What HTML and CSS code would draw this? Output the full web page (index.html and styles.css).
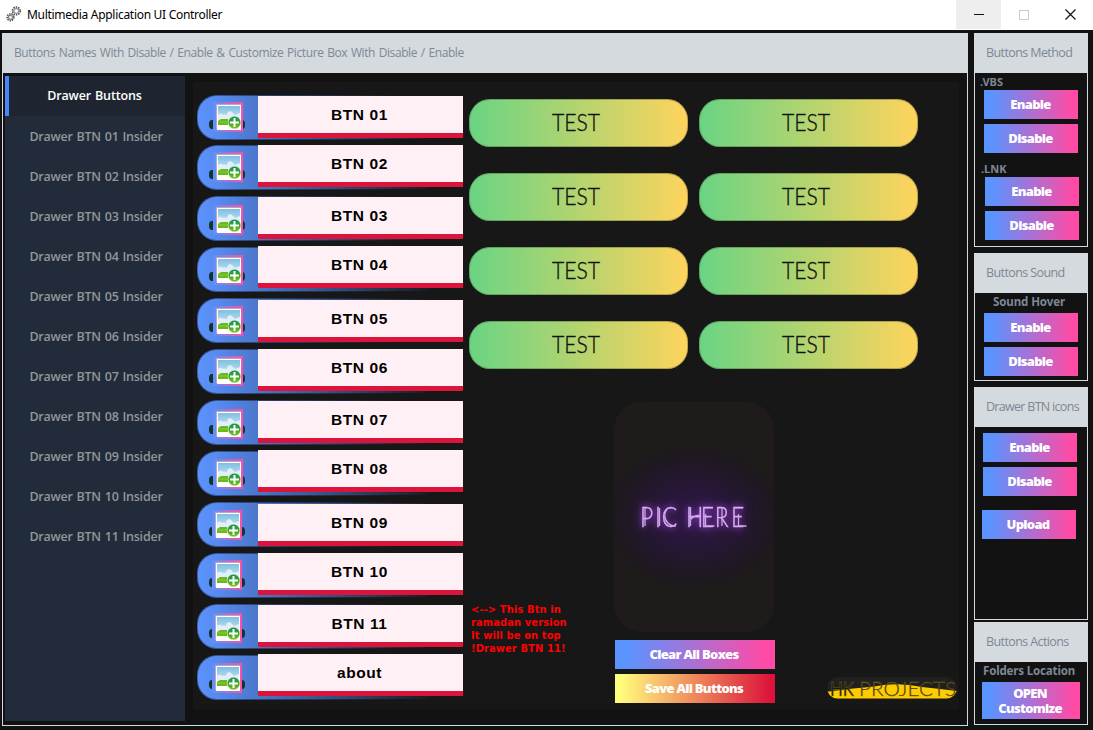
FILE: index.html
```html
<!DOCTYPE html>
<html lang="en">
<head>
<meta charset="utf-8">
<title>Multimedia Application UI Controller</title>
<link rel="stylesheet" href="styles.css">
</head>
<body>
<svg class="defs" width="0" height="0" aria-hidden="true">
  <defs>
    <linearGradient id="sky" x1="0" y1="0" x2="0" y2="1"><stop offset="0" stop-color="#7fbfe0"/><stop offset="1" stop-color="#d3eaf8"/></linearGradient>
    <linearGradient id="leaf" x1="0" y1="0" x2="0" y2="1"><stop offset="0" stop-color="#138f5f"/><stop offset="0.5" stop-color="#3ba42a"/><stop offset="1" stop-color="#7cc421"/></linearGradient>
    <linearGradient id="frame" x1="0" y1="0" x2="1" y2="0"><stop offset="0" stop-color="#5b92fd"/><stop offset="1" stop-color="#ff4fa6"/></linearGradient>
    <symbol id="picture" viewBox="0 0 30 30">
      <rect width="30" height="30" fill="url(#frame)"/>
      <rect x="3" y="2" width="25" height="25" fill="#b7a6c6"/>
      <rect x="4" y="3" width="24" height="25" fill="#fff"/>
      <rect x="5" y="4" width="22" height="16" fill="url(#sky)"/>
      <path d="M5 13c2-2 4-1 5 0 2-1 3 0 4 0 0-4 4-5 6-2l2 2 5-2v9H5z" fill="#e2effb"/>
      <path d="M5 19l3-2h7v6H5z" fill="#69b81d"/>
      <path d="M5 20h11" stroke="#86ce35"/>
      <circle cx="21.500" cy="20.500" r="6.300" fill="url(#leaf)" stroke="#d8f2c2" stroke-width=".5"/>
      <path d="M21.500 16v9M17 20.500h9" stroke="#fff" stroke-width="2"/>
    </symbol>
    <symbol id="test" viewBox="0 0 50 26"><text class="test-text" x="1" y="21" textLength="48" lengthAdjust="spacingAndGlyphs">TEST</text></symbol>
  </defs>
</svg>

<header class="titlebar">
  <svg class="gears" viewBox="0 0 16 16" width="16" height="16">
    <g fill="none" stroke="#555">
      <circle cx="10.300" cy="4.900" r="3.800" stroke-width="1.800" stroke-dasharray="1.500 .9"/>
      <circle cx="10.300" cy="4.900" r="2.400" stroke="#999" stroke-width="1.300"/>
      <circle cx="4.500" cy="11.300" r="3.300" stroke-width="1.800" stroke-dasharray="1.400 .9"/>
      <circle cx="4.500" cy="11.300" r="2" stroke="#888" stroke-width="1.300"/>
    </g>
  </svg>
  <span class="title">Multimedia Application UI Controller</span>
  <div class="controls">
    <div class="ctl hover"><svg width="10" height="10"><path d="M0 4.500h10" stroke="#111"/></svg></div>
    <div class="ctl"><svg width="10" height="10"><rect x=".5" y=".5" width="9" height="9" fill="none" stroke="#ccc"/></svg></div>
    <div class="ctl"><svg width="11" height="11"><path d="M.5.500l10 10M10.500.500l-10 10" stroke="#111" stroke-width="1.200"/></svg></div>
  </div>
</header>

<div class="app">
  <main class="main">
    <h1 class="head main-head">Buttons Names With Disable / Enable &amp; Customize Picture Box With Disable / Enable</h1>
    <div class="body">
      <nav class="nav">
        <a class="active">Drawer Buttons</a>
        <a>Drawer BTN 01 Insider</a>
        <a>Drawer BTN 02 Insider</a>
        <a>Drawer BTN 03 Insider</a>
        <a>Drawer BTN 04 Insider</a>
        <a>Drawer BTN 05 Insider</a>
        <a>Drawer BTN 06 Insider</a>
        <a>Drawer BTN 07 Insider</a>
        <a>Drawer BTN 08 Insider</a>
        <a>Drawer BTN 09 Insider</a>
        <a>Drawer BTN 10 Insider</a>
        <a>Drawer BTN 11 Insider</a>
      </nav>
      <section class="panel">
        <div class="rows">
          <div class="row"><svg class="pic"><use href="#picture"/></svg><div class="field">BTN 01</div></div>
          <div class="row"><svg class="pic"><use href="#picture"/></svg><div class="field">BTN 02</div></div>
          <div class="row"><svg class="pic"><use href="#picture"/></svg><div class="field">BTN 03</div></div>
          <div class="row"><svg class="pic"><use href="#picture"/></svg><div class="field">BTN 04</div></div>
          <div class="row"><svg class="pic"><use href="#picture"/></svg><div class="field">BTN 05</div></div>
          <div class="row"><svg class="pic"><use href="#picture"/></svg><div class="field">BTN 06</div></div>
          <div class="row"><svg class="pic"><use href="#picture"/></svg><div class="field">BTN 07</div></div>
          <div class="row"><svg class="pic"><use href="#picture"/></svg><div class="field">BTN 08</div></div>
          <div class="row"><svg class="pic"><use href="#picture"/></svg><div class="field">BTN 09</div></div>
          <div class="row"><svg class="pic"><use href="#picture"/></svg><div class="field">BTN 10</div></div>
          <div class="row"><svg class="pic"><use href="#picture"/></svg><div class="field">BTN 11</div></div>
          <div class="row"><svg class="pic"><use href="#picture"/></svg><div class="field">about</div></div>
        </div>
        <div class="right">
          <div class="tests">
            <div class="test"><svg><use href="#test"/></svg></div>
            <div class="test"><svg><use href="#test"/></svg></div>
            <div class="test"><svg><use href="#test"/></svg></div>
            <div class="test"><svg><use href="#test"/></svg></div>
            <div class="test"><svg><use href="#test"/></svg></div>
            <div class="test"><svg><use href="#test"/></svg></div>
            <div class="test"><svg><use href="#test"/></svg></div>
            <div class="test"><svg><use href="#test"/></svg></div>
          </div>
          <div class="lower">
            <p class="note">&lt;--&gt; This Btn in<br>ramadan version<br>It will be on top<br>!Drawer BTN 11!</p>
            <div class="preview">
              <div class="box">
                <svg class="sign" width="130" height="50">
                  <text class="neon" transform="scale(.85 1)" x="13 30.500 38.500 56 67 84.500 101 120" y="35">PIC HERE</text>
                  <path class="tubes" d="M16 16v18M30.500 16v18M38 17q-5 8 1 14q3 3 8 3M61.500 15v19M62 27q5-5 10-3M76.500 22v12h9M93 16v18M109.500 22v12h8"/>
                </svg>
              </div>
              <button class="btn wide">Clear All Boxes</button>
              <button class="btn wide save">Save All Buttons</button>
            </div>
            <svg class="logo" width="132" height="24">
              <defs><clipPath id="logoclip"><rect x="1" y="1" width="130" height="21.500" rx="10.500"/></clipPath></defs>
              <rect x="1" y="1" width="130" height="21.500" rx="10.500" fill="#202020"/>
              <path clip-path="url(#logoclip)" d="M0 16Q30 12 48 10.500Q72 6 96 11Q115 13 132 15V24H0z" fill="#ffcc00"/>
              <text class="hk" x="4" y="19.500" textLength="24" lengthAdjust="spacingAndGlyphs">HK</text>
              <text class="projects" x="33" y="19.500" textLength="97" lengthAdjust="spacingAndGlyphs">PROJECTS</text>
            </svg>
          </div>
        </div>
      </section>
    </div>
  </main>

  <aside class="side">
    <section class="card method">
      <h2 class="head">Buttons Method</h2>
      <div class="tag vbs">.VBS</div>
      <button class="btn">Enable</button>
      <button class="btn">Disable</button>
      <div class="tag lnk">.LNK</div>
      <button class="btn shift">Enable</button>
      <button class="btn shift">Disable</button>
    </section>
    <section class="card sound">
      <h2 class="head">Buttons Sound</h2>
      <div class="label">Sound Hover</div>
      <button class="btn">Enable</button>
      <button class="btn">Disable</button>
    </section>
    <section class="card icons">
      <h2 class="head">Drawer BTN icons</h2>
      <button class="btn">Enable</button>
      <button class="btn">Disable</button>
      <button class="btn upload">Upload</button>
    </section>
    <section class="card actions">
      <h2 class="head">Buttons Actions</h2>
      <div class="label">Folders Location</div>
      <button class="btn open">OPEN<br>Customize</button>
    </section>
  </aside>
</div>
</body>
</html>
```
FILE: styles.css
```css
* { box-sizing: border-box; margin: 0; padding: 0; }
body { width: 1093px; height: 730px; overflow: hidden; background: #121212; font-family: "Open Sans", "Noto Sans", sans-serif; }
.defs { display: block; height: 0; }
svg { display: block; flex: none; }

.titlebar { display: flex; align-items: center; height: 30px; background: #fff; padding-left: 6px; }
.gears { margin-top: -3px; }
.title { font: 12px "Noto Sans", sans-serif; color: #000; margin: -2px 0 0 5px; letter-spacing: -.3px; white-space: nowrap; }
.controls { display: flex; margin-left: auto; align-self: flex-start; }
.ctl { display: flex; width: 46px; height: 29px; align-items: center; justify-content: center; }
.ctl:first-child { width: 45px; }
.ctl.hover { background: #eee; }

.app { display: flex; gap: 6px; padding: 3px 0 0 2px; }
.main { width: 966px; height: 693px; border: 1px solid #d5dade; }
.head { height: 40px; background: #d5dade; color: #7d8894; font-size: 12.500px; font-weight: 400; line-height: 39px; white-space: nowrap; }
.main-head { height: 39px; padding-left: 11px; font-size: 12px; letter-spacing: -.41px; word-spacing: 1px; line-height: 38px; }
.body { display: flex; padding: 3px 0 0 2px; }
.nav { width: 180px; height: 645px; background: #222b3a; }
.nav a { display: block; height: 40px; line-height: 42px; text-align: center; color: #92969b; font-size: 12.500px; font-weight: 600; letter-spacing: -.22px; word-spacing: .8px; padding-left: 2px; }
.nav a.active { background: #1e2530; color: #fff; border-left: 4px solid #4a84fa; padding: 0 5px 0 0; line-height: 40px; letter-spacing: -.12px; }
.panel { display: flex; width: 766px; height: 627px; margin: 6px 0 0 8px; background: #171717; padding-left: 4px; }

.rows { display: grid; grid-template-rows: 50px repeat(11, 51px); width: 266px; padding-top: 13px; align-content: start; }
.row { position: relative; display: flex; width: 245px; height: 45px; align-items: flex-start; border: 1px solid transparent; border-radius: 20px; padding-left: 15px;
  background: linear-gradient(90deg, #5c93ff 0, #4b76ca 61px, #171717 240px) padding-box, linear-gradient(90deg, #3b5fa8 0, #2b4475 61px, #171717 200px) border-box; }
.row::before { content: ""; position: absolute; left: 11px; top: 24px; width: 36px; height: 9px; border-radius: 3px / 4px; background: #12342f; }
.pic { position: relative; width: 30px; height: 30px; margin: 6px 15px 0 0; }
.field { position: relative; flex: none; width: 205px; height: 42px; margin-top: 0; padding-right: 2px; background: #fff0f5; border-bottom: 5px solid #dc143c; text-align: center; font: bold 15.500px/37px "Liberation Sans", Arial, sans-serif; letter-spacing: .6px; color: #000; }
.row:nth-child(4n+2) .field { margin-top: -1px; }
.row:nth-child(4n) .field { margin-top: -2px; }
.row:nth-child(5) .field, .row:nth-child(9) .field { margin-top: 1px; }
.row:nth-child(4n+3) .pic { margin-top: 8px; }
.row:nth-child(4n) .pic, .row:nth-child(5) .pic, .row:nth-child(9) .pic { margin-top: 7px; }
.row:nth-child(n+9) .pic { margin-left: -1px; margin-right: 16px; }

.right { flex: 1; padding: 17px 0 0 6px; }
.tests { display: grid; grid-template-columns: 219px 219px; grid-auto-rows: 48px; gap: 26px 11px; }
.test { display: flex; border-radius: 21px; background: linear-gradient(90deg, #69d483, #ffd45c); box-shadow: inset 0 0 0 1px rgba(60,75,40,.35); padding: 11px 0 0 82px; }
.test svg { width: 50px; height: 26px; }
.test-text { font: 300 23.500px Lato, sans-serif; fill: #111; stroke: #111; stroke-width: .35px; }

.lower { display: flex; align-items: flex-start; padding-top: 33px; }
.note { width: 145px; padding: 201px 0 0 2px; font: bold 11px/13px "DejaVu Sans Condensed", Tahoma, sans-serif; letter-spacing: .12px; color: #f00; white-space: nowrap; }
.preview { display: flex; flex-direction: column; width: 162px; }
.box { display: flex; align-items: center; justify-content: center; width: 160px; height: 230px; margin-bottom: 8px; border-radius: 28px; background: radial-gradient(ellipse 92px 72px at 50% 50%, #2f1948, #261735 45%, #1d191e 90%, #1f1b1b 100%); }
.sign { overflow: visible; }
.neon { font: 300 27px Lato, sans-serif; fill: #d9b8ef; stroke: #cfa3eb; stroke-width: .4px; filter: drop-shadow(0 0 3px #8d3bc6) drop-shadow(0 0 5px #6b2c92); }
.tubes { fill: none; stroke: #cda6e6; stroke-width: 1.300px; }
.btn { display: block; width: 94px; height: 29px; padding-right: 1px; border: 0; background: linear-gradient(90deg, #5b93ff 8%, #ff4ba5 94%); color: #fff; font: 800 13px/15px "Open Sans", sans-serif; letter-spacing: -.7px; text-align: center; }
.btn.wide { width: 160px; margin: 0 0 5px 1px; padding-right: 2px; }
.btn.save { background: linear-gradient(90deg, #fffb7c 4%, #dc143c 97%); }
.logo { margin: 274px 0 0 50px; }
.hk { font: 400 20px Lato, sans-serif; fill: #1d1a0d; stroke: #8c761f; stroke-width: .4px; }
.projects { font: 300 20px Lato, sans-serif; fill: #33290a; stroke: #7a671a; stroke-width: .35px; }

.side { width: 114px; }
.card { border: 1px solid #d5dade; background: #121212; padding-left: 9px; }
.card .head { margin: -1px 0 0 -10px; padding-left: 12px; letter-spacing: -.6px; width: 114px; }
.card .btn + .btn { margin-top: 5px; }
.method { height: 214px; }
.sound { height: 128px; margin-top: 6px; }
.icons { height: 233px; margin-top: 6px; padding-left: 8px; }
.actions { height: 103px; margin-top: 2px; padding-left: 7px; }
.card.icons .head { margin-left: -9px; letter-spacing: -.7px; }
.card.actions .head { margin-left: -8px; }
.tag { font: bold 11px/17px "Noto Sans", sans-serif; color: #7d8894; margin-left: -4px; height: 17px; }
.tag.lnk { height: 24px; padding-top: 7px; margin-left: -3px; }
.btn.shift { margin-left: 1px; }
.label { font: bold 11.500px/18px "Noto Sans", sans-serif; color: #7d8894; height: 20px; padding-left: 9px; white-space: nowrap; letter-spacing: -.1px; }
.icons .head + .btn { margin-top: 6px; }
.card .btn.upload { margin: 14px 0 0 -1px; padding-right: 2px; }
.actions .label { padding-left: 1px; letter-spacing: -.15px; }
.btn.open { width: 98px; height: 37px; padding-right: 2px; }
```
